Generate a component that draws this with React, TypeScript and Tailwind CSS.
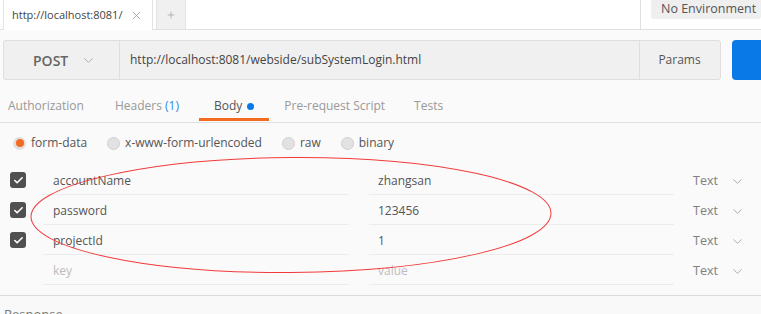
import { Check, ChevronDown, Plus, X } from "lucide-react";

const rows = [
  { key: "accountName", value: "zhangsan" },
  { key: "password", value: "123456" },
  { key: "projectId", value: "1" },
];

const font = { fontFamily: '"Open Sans", "Liberation Sans", sans-serif' };

function Radio({ on, label }: { on?: boolean; label: string }) {
  return (
    <div className="flex items-center gap-[5px]">
      <span
        className={
          on
            ? "flex h-[13px] w-[13px] items-center justify-center rounded-full bg-[#e0e0e0]"
            : "h-[13px] w-[13px] rounded-full border border-[#d0d0d0] bg-[#e2e2e2]"
        }
      >
        {on && <span className="h-[8px] w-[8px] rounded-full bg-[#f26b21]" />}
      </span>
      <span>{label}</span>
    </div>
  );
}

function Row({ k, v, checked, placeholder }: { k: string; v: string; checked?: boolean; placeholder?: boolean }) {
  return (
    <div className="flex h-[30px] items-center">
      <div className="flex w-[43px] justify-start pl-[10px]">
        {checked && (
          <span className="flex h-[16px] w-[16px] items-center justify-center rounded-[3px] bg-[#505050]">
            <Check className="h-[11px] w-[11px] text-white" strokeWidth={3.5} />
          </span>
        )}
      </div>
      <div
        className={`flex h-full w-[306px] items-center border-b border-[#ececec] pl-[10px] pt-[2px] ${
          placeholder ? "text-[#bdbdbd]" : "text-[#555]"
        }`}
      >
        {k}
      </div>
      <div
        className={`ml-[20px] flex h-full w-[305px] items-center border-b border-[#ececec] pl-[9px] pt-[2px] ${
          placeholder ? "text-[#bdbdbd]" : "text-[#555]"
        }`}
      >
        {v}
      </div>
      <div className="ml-[19px] flex items-center gap-[12px] pt-[2px] text-[12.5px] text-[#808080]">
        <span>Text</span>
        <ChevronDown className="h-[15px] w-[15px] text-[#a8a8a8]" strokeWidth={1.5} />
      </div>
    </div>
  );
}

export default function App() {
  return (
    <div className="relative h-[314px] w-[761px] overflow-hidden bg-[#fafafa] text-[12px]" style={font}>
      {/* tab strip */}
      <div className="flex h-[30px] border-b border-[#e0e0e0] bg-white">
        <div className="ml-[3px] flex h-[30px] w-[150px] items-center justify-between border-x border-[#e3e3e3] bg-white pl-[8px] pr-[9px] text-[#444]">
          <span className="whitespace-nowrap text-[11px]">http://localhost:8081/</span>
          <X className="h-[13px] w-[13px] text-[#9a9a9a]" strokeWidth={1.5} />
        </div>
        <div className="ml-[3px] flex h-[29px] w-[30px] items-center justify-center border-x border-[#e3e3e3] bg-[#f0f0f0]">
          <Plus className="h-[10px] w-[10px] text-[#aaa]" strokeWidth={2} />
        </div>
        <div className="flex-1" />
        <div className="h-[29px] border-l border-[#e0e0e0]" />
        <div className="ml-[10px] h-[19px] w-[110px] rounded-b-[3px] bg-[#efefef] pl-[10px] text-[12.5px] leading-[18px] text-[#555]">
          No Environment
        </div>
      </div>

      {/* request bar */}
      <div className="mt-[10px] flex h-[40px] pl-[3px]">
        <div className="flex w-[731px] rounded-[3px] border border-[#dedede] bg-[#f0f0f0]">
          <div className="flex w-[116px] items-center gap-[13px] border-r border-[#dedede] pl-[29px] text-[14px] font-semibold text-[#666]">
            POST
            <ChevronDown className="h-[15px] w-[15px] text-[#aaa]" strokeWidth={1.5} />
          </div>
          <div className="flex flex-1 items-center pl-[10px] text-[#444]">
            http://localhost:8081/webside/subSystemLogin.html
          </div>
          <div className="flex w-[81px] items-center justify-center border-l border-[#dedede] text-[#555]">
            Params
          </div>
        </div>
        <div className="ml-[11px] w-[30px] rounded-l-[4px] bg-[#0a79e8]" />
      </div>

      {/* request tabs */}
      <div className="mt-[10px] flex h-[33px] items-center border-b border-[#e0e0e0] pl-[8px] text-[#999]">
        <span>Authorization</span>
        <span className="ml-[31px]">
          Headers <span className="text-[#2d8ae6]">(1)</span>
        </span>
        <div className="relative ml-[20px] flex h-full items-center px-[15px] text-[#555]">
          Body
          <span className="ml-[5px] h-[7px] w-[7px] rounded-full bg-[#0a79e8]" />
          <span className="absolute bottom-[1px] left-0 right-0 h-[3px] bg-[#f26b21]" />
        </div>
        <span className="ml-[15px]">Pre-request Script</span>
        <span className="ml-[29px]">Tests</span>
      </div>

      {/* body type */}
      <div className="flex h-[40px] items-center gap-[20px] pl-[13px] text-[#555]">
        <Radio on label="form-data" />
        <Radio label="x-www-form-urlencoded" />
        <Radio label="raw" />
        <Radio label="binary" />
      </div>

      {/* params table */}
      <div className="pt-[2px]">
        {rows.map((r) => (
          <Row key={r.key} k={r.key} v={r.value} checked />
        ))}
        <Row k="key" v="value" placeholder />
      </div>

      <div className="mt-[10px] border-t border-[#dcdcdc] bg-[#f9f9f9] pl-[4px] pt-[9px] text-[13px] text-[#777]">
        Response
      </div>

      {/* hand-drawn annotation */}
      <svg className="pointer-events-none absolute left-0 top-0" width="761" height="314">
        <ellipse cx="291" cy="215" rx="260" ry="57.5" fill="none" stroke="#f23a3a" strokeWidth="1" transform="rotate(-0.4 291 215)" />
      </svg>
    </div>
  );
}
